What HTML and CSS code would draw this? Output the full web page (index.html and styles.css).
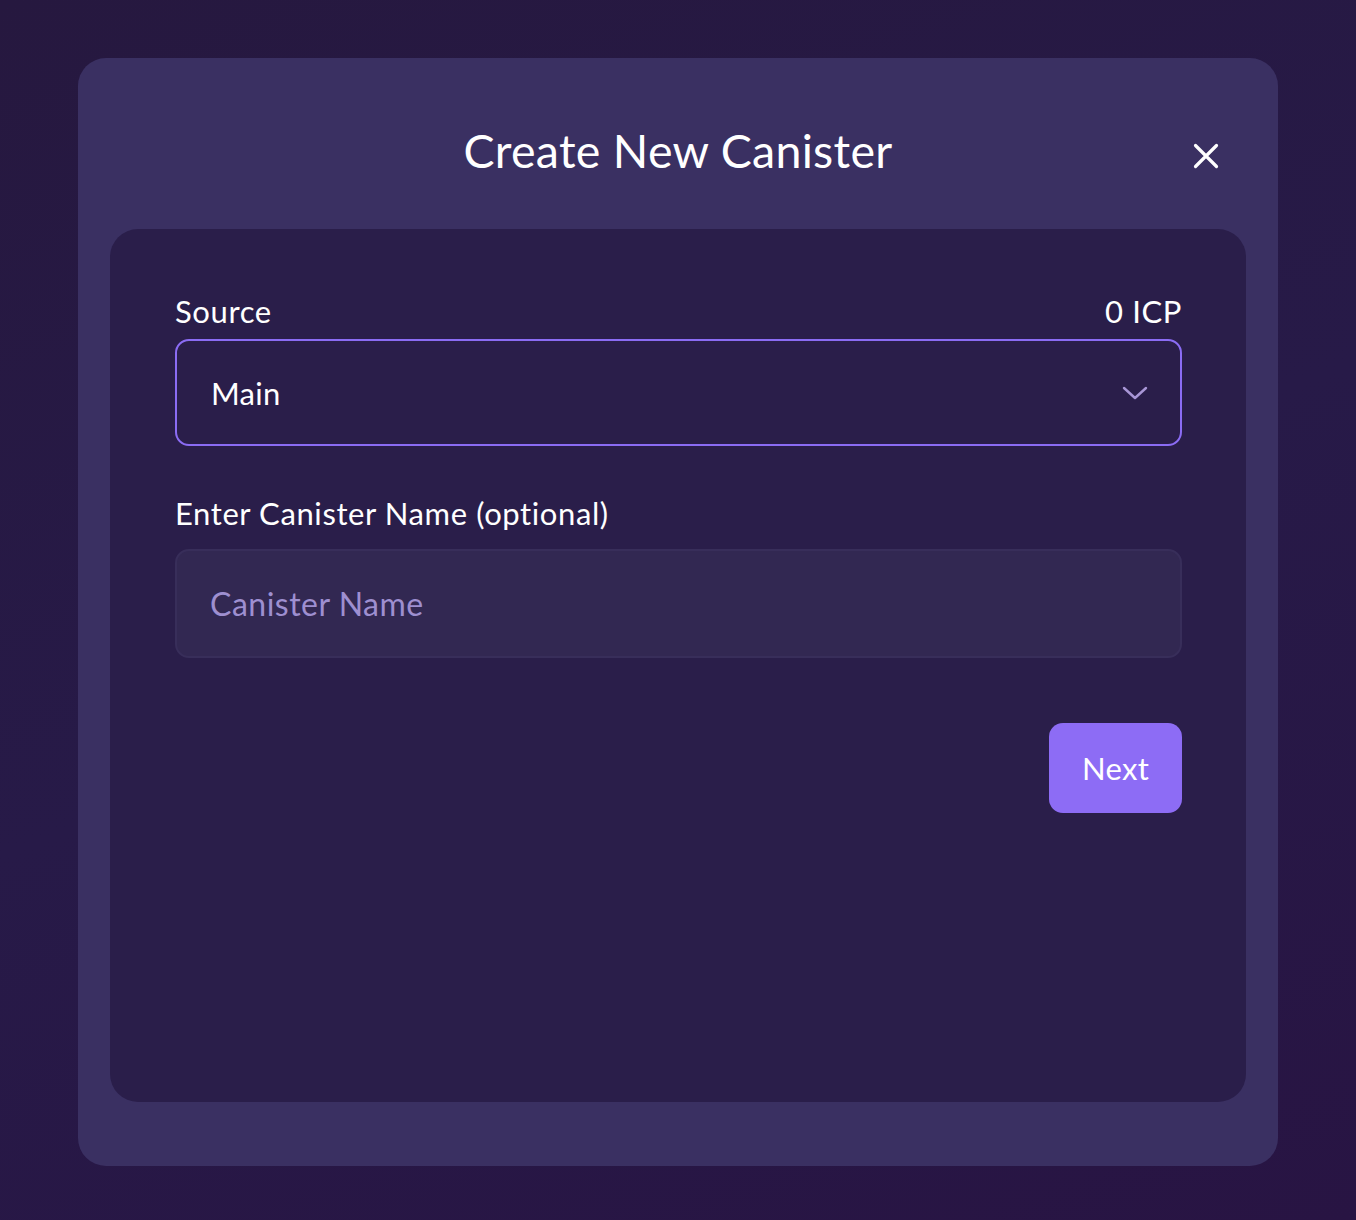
FILE: index.html
```html
<!DOCTYPE html>
<html>
<head>
<meta charset="utf-8">
<link rel="stylesheet" href="styles.css">
</head>
<body>
<div class="page">
  <div class="modal">
    <div class="modal-header">
      <h1 class="title">Create New Canister</h1>
      <button class="close" aria-label="Close">
        <svg width="26" height="26" viewBox="0 0 26 26"><path d="M2.5 2.5 L23.5 23.5 M23.5 2.5 L2.5 23.5" stroke="#fff" stroke-width="3.2" stroke-linecap="round"/></svg>
      </button>
    </div>
    <div class="panel">
      <div class="label-row">
        <span class="label">Source</span>
        <span class="label">0 ICP</span>
      </div>
      <div class="select">
        <span class="select-value">Main</span>
        <svg class="chevron" width="26" height="16" viewBox="0 0 26 16"><path d="M2 3 L13 13 L24 3" fill="none" stroke="#a896d6" stroke-width="2.4" stroke-linecap="round" stroke-linejoin="round"/></svg>
      </div>
      <div class="label-row second">
        <span class="label">Enter Canister Name (optional)</span>
      </div>
      <div class="input"><span class="placeholder">Canister Name</span></div>
      <div class="actions">
        <button class="next">Next</button>
      </div>
    </div>
  </div>
</div>
</body>
</html>
```
FILE: styles.css
```css
* { box-sizing: border-box; }
html, body { margin: 0; padding: 0; }
body {
  background: linear-gradient(160deg, #26183f 0%, #271a48 50%, #281443 100%);
  font-family: Lato, "Open Sans", sans-serif;
  color: #fff;
  height: 1220px;
}
.page {
  padding: 58px 78px 0;
}
.modal {
  background: #3a3062;
  border-radius: 28px;
  height: 1108px;
  padding: 0 32px 64px;
  display: flex;
  flex-direction: column;
}
.modal-header {
  height: 171px;
  padding-top: 12px;
  position: relative;
  display: flex;
  align-items: center;
  justify-content: center;
}
.title {
  margin: 0;
  font-weight: 400;
  font-size: 46.5px;
  letter-spacing: 0.3px;
}
.close {
  position: absolute;
  right: 27px;
  top: 85px;
  background: none;
  border: 0;
  padding: 0;
  width: 26px;
  height: 26px;
  cursor: pointer;
}
.close svg { display: block; }
.panel {
  flex: 1;
  background: #2a1e4a;
  border-radius: 28px;
  padding: 62px 64px 0 65px;
  display: flex;
  flex-direction: column;
}
.label-row {
  display: flex;
  justify-content: space-between;
  align-items: flex-start;
  height: 48px;
}
.label {
  font-size: 31px;
  line-height: 40px;
  letter-spacing: 0.6px;
}
.label-row.second {
  margin-top: 47px;
  height: 56px;
}
.select {
  height: 107px;
  border: 2.5px solid #8b6cf4;
  border-radius: 14px;
  display: flex;
  align-items: center;
  justify-content: space-between;
  padding: 0 32px 0 34px;
}
.select-value {
  font-size: 31px;
  letter-spacing: 0.3px;
}
.chevron { display: block; }
.input {
  height: 109px;
  background: #322852;
  border: 2px solid #382e5a;
  border-radius: 14px;
  display: flex;
  align-items: center;
  padding: 0 33px;
}
.placeholder {
  font-size: 32px;
  letter-spacing: 0.5px;
  color: #9e8fd0;
}
.actions {
  display: flex;
  justify-content: flex-end;
  margin-top: 65px;
}
.next {
  width: 133px;
  height: 90px;
  background: #8d6cf5;
  border: 0;
  border-radius: 14px;
  color: #fff;
  font-family: Lato, "Open Sans", sans-serif;
  font-size: 31px;
  letter-spacing: 0.3px;
  cursor: pointer;
}
```
